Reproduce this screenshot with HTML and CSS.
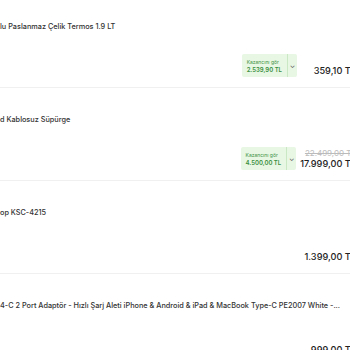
FILE: index.html
```html
<!DOCTYPE html>
<html lang="tr">
  <head>
    <meta charset="UTF-8" />
    <meta name="viewport" content="width=device-width, initial-scale=1.0" />
    <title>Sepet</title>
    <link rel="stylesheet" href="styles.css">
  </head>
  <body>
    <main class="list">
      <div class="item">
        <p class="title">lu Paslanmaz Çelik Termos 1.9 LT</p>
        <div class="bottom">
          <div class="earn">
            <div class="earn-text">
              <span class="earn-label">Kazancını gör</span>
              <span class="earn-value">2.539,90 TL</span>
            </div>
            <span class="earn-toggle">&#8964;</span>
          </div>
          <div class="prices">
            <span class="price">359,10 TL</span>
          </div>
        </div>
      </div>
      <div class="item">
        <p class="title">d Kablosuz Süpürge</p>
        <div class="bottom">
          <div class="earn">
            <div class="earn-text">
              <span class="earn-label">Kazancını gör</span>
              <span class="earn-value">4.500,00 TL</span>
            </div>
            <span class="earn-toggle">&#8964;</span>
          </div>
          <div class="prices">
            <span class="old-price">22.499,00 TL</span>
            <span class="price">17.999,00 TL</span>
          </div>
        </div>
      </div>
      <div class="item">
        <p class="title">op KSC-4215</p>
        <div class="bottom">
          <div class="prices">
            <span class="price">1.399,00 TL</span>
          </div>
        </div>
      </div>
      <div class="item">
        <p class="title">4-C 2 Port Adaptör - Hızlı Şarj Aleti iPhone &amp; Android &amp; iPad &amp; MacBook Type-C PE2007 White -...</p>
        <div class="bottom">
          <div class="prices">
            <span class="price">999,00 TL</span>
          </div>
        </div>
      </div>
    </main>
  </body>
</html>
```

FILE: styles.css
```css
* {
  box-sizing: border-box;
  margin: 0;
}
html,
body {
  overflow: hidden;
}
body {
  font-family: Inter, "Noto Sans", sans-serif;
  color: #333;
  background: #fff;
}
.list {
  width: 356px;
  margin-top: -6px;
}
.item {
  height: 93px;
  padding: 27px 0 0;
  border-top: 1px solid #f0f0f0;
  display: flex;
  flex-direction: column;
}
.title {
  font-size: 7.3px;
  font-weight: 500;
  line-height: 10px;
  white-space: nowrap;
}
.bottom {
  margin-top: auto;
  padding-bottom: 10px;
  display: flex;
  justify-content: flex-end;
  align-items: flex-end;
  gap: 4px;
}
.earn {
  display: flex;
  align-items: stretch;
  background: #e8f7e4;
  color: #3a8f3e;
  border-radius: 2px;
  height: 23px;
}
.earn-text {
  display: flex;
  flex-direction: column;
  justify-content: center;
  padding: 0 5px;
  gap: 1px;
}
.earn-label {
  font-size: 5px;
  line-height: 6px;
}
.earn-value {
  font-size: 6px;
  font-weight: 600;
  line-height: 7px;
}
.earn-toggle {
  border-left: 1px solid #c9e8c3;
  width: 10px;
  display: flex;
  align-items: center;
  justify-content: center;
  font-size: 7px;
  color: #555;
}
.prices {
  display: flex;
  flex-direction: column;
  align-items: flex-end;
  min-width: 55px;
}
.old-price {
  font-size: 8px;
  line-height: 10px;
  color: #bbb;
  text-decoration: line-through;
}
.price {
  font-size: 9.2px;
  font-weight: 500;
  line-height: 12px;
  color: #222;
}
```
